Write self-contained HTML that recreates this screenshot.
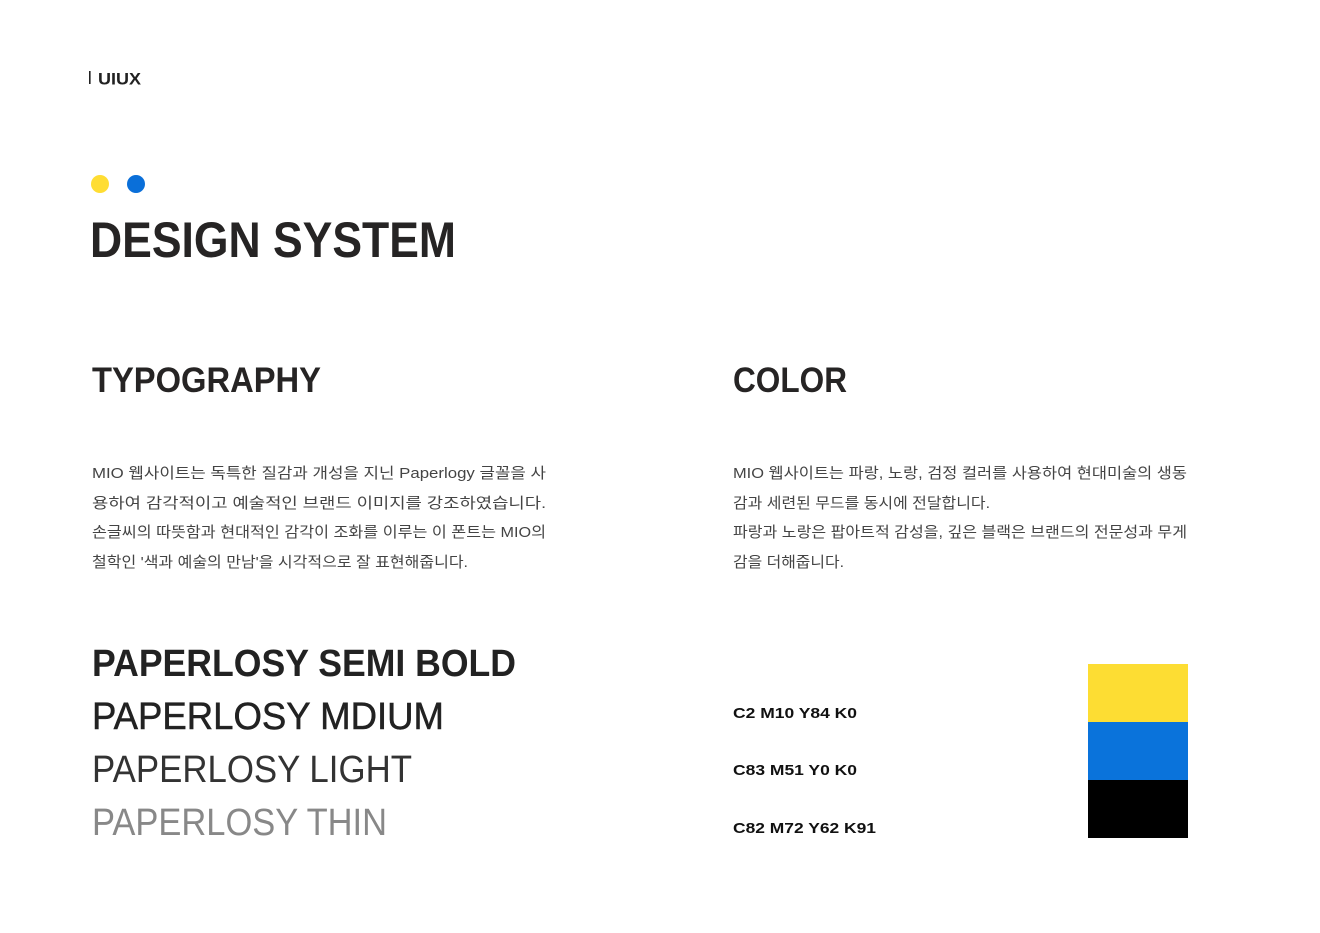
<!DOCTYPE html>
<html><head><meta charset="utf-8"><style>
html,body{margin:0;padding:0;background:#fff;}
svg{display:block}
.k{font-family:"Liberation Sans","Noto Sans CJK KR",sans-serif;fill:#444;font-size:15px;}
</style></head><body>
<svg width="1320" height="933" viewBox="0 0 1320 933" xmlns="http://www.w3.org/2000/svg">
<rect width="1320" height="933" fill="#fff"/>
<rect x="89" y="71" width="1.6" height="13" fill="#222"/>
<text x="98" y="84.5" font-family="Liberation Sans,sans-serif" font-weight="bold" font-size="17" fill="#222" textLength="43" lengthAdjust="spacingAndGlyphs">UIUX</text>
<circle cx="100" cy="184" r="9" fill="#FFDD33"/>
<circle cx="136" cy="184" r="9" fill="#0A6FD9"/>
<text x="90" y="257" font-family="Liberation Sans,sans-serif" font-weight="bold" font-size="50" fill="#262424" textLength="366" lengthAdjust="spacingAndGlyphs">DESIGN SYSTEM</text>
<text x="92" y="392" font-family="Liberation Sans,sans-serif" font-weight="bold" font-size="35" fill="#262424" textLength="229" lengthAdjust="spacingAndGlyphs">TYPOGRAPHY</text>
<text x="733" y="392" font-family="Liberation Sans,sans-serif" font-weight="bold" font-size="35" fill="#262424" textLength="114" lengthAdjust="spacingAndGlyphs">COLOR</text>

<text class="k" x="92" y="478" textLength="454" lengthAdjust="spacingAndGlyphs">MIO 웹사이트는 독특한 질감과 개성을 지닌 Paperlogy 글꼴을 사</text>
<text class="k" x="92" y="508" textLength="454" lengthAdjust="spacingAndGlyphs">용하여 감각적이고 예술적인 브랜드 이미지를 강조하였습니다.</text>
<text class="k" x="92" y="537" textLength="454" lengthAdjust="spacingAndGlyphs">손글씨의 따뜻함과 현대적인 감각이 조화를 이루는 이 폰트는 MIO의</text>
<text class="k" x="92" y="567" textLength="376" lengthAdjust="spacingAndGlyphs">철학인 '색과 예술의 만남'을 시각적으로 잘 표현해줍니다.</text>

<text class="k" x="733" y="478" textLength="454" lengthAdjust="spacingAndGlyphs">MIO 웹사이트는 파랑, 노랑, 검정 컬러를 사용하여 현대미술의 생동</text>
<text class="k" x="733" y="508" textLength="257" lengthAdjust="spacingAndGlyphs">감과 세련된 무드를 동시에 전달합니다.</text>
<text class="k" x="733" y="537" textLength="454" lengthAdjust="spacingAndGlyphs">파랑과 노랑은 팝아트적 감성을, 깊은 블랙은 브랜드의 전문성과 무게</text>
<text class="k" x="733" y="567" textLength="111" lengthAdjust="spacingAndGlyphs">감을 더해줍니다.</text>

<text x="92" y="676" font-family="Liberation Sans,sans-serif" font-weight="bold" font-size="38" fill="#222" textLength="424" lengthAdjust="spacingAndGlyphs">PAPERLOSY SEMI BOLD</text>
<text x="92" y="729" font-family="Liberation Sans,sans-serif" font-size="38" fill="#222" stroke="#222" stroke-width="0.5" textLength="352" lengthAdjust="spacingAndGlyphs">PAPERLOSY MDIUM</text>
<text x="92" y="782" font-family="Liberation Sans,sans-serif" font-size="38" fill="#333" textLength="320" lengthAdjust="spacingAndGlyphs">PAPERLOSY LIGHT</text>
<text x="92" y="835" font-family="Liberation Sans,sans-serif" font-size="38" fill="#888" textLength="295" lengthAdjust="spacingAndGlyphs">PAPERLOSY THIN</text>

<text x="733" y="718" font-family="Liberation Sans,sans-serif" font-weight="bold" font-size="15" fill="#111" textLength="124" lengthAdjust="spacingAndGlyphs">C2 M10 Y84 K0</text>
<text x="733" y="775" font-family="Liberation Sans,sans-serif" font-weight="bold" font-size="15" fill="#111" textLength="124" lengthAdjust="spacingAndGlyphs">C83 M51 Y0 K0</text>
<text x="733" y="833" font-family="Liberation Sans,sans-serif" font-weight="bold" font-size="15" fill="#111" textLength="143" lengthAdjust="spacingAndGlyphs">C82 M72 Y62 K91</text>

<rect x="1088" y="664" width="100" height="58" fill="#FDDD33"/>
<rect x="1088" y="722" width="100" height="58" fill="#0A73DB"/>
<rect x="1088" y="780" width="100" height="58" fill="#000"/>
</svg>
</body></html>
